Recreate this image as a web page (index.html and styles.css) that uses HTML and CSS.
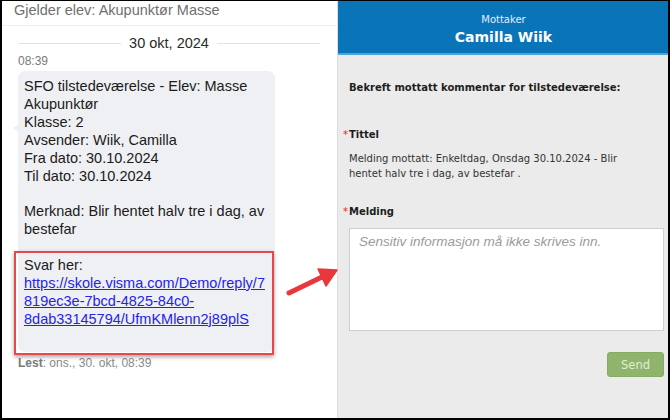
FILE: index.html
```html
<!DOCTYPE html>
<html lang="no">
<head>
<meta charset="utf-8">
<title>Svar</title>
<link rel="stylesheet" href="styles.css">
</head>
<body>
<div class="frame">
  <section class="left">
    <div class="subject">Gjelder elev: Akupunktør Masse</div>
    <div class="date-sep"><span class="rule"></span><span class="date">30 okt, 2024</span><span class="rule"></span></div>
    <div class="time">08:39</div>
    <div class="bubble">
      SFO tilstedeværelse - Elev: Masse Akupunktør<br>
      Klasse: 2<br>
      Avsender: Wiik, Camilla<br>
      Fra dato: 30.10.2024<br>
      Til dato: 30.10.2024<br>
      <br>
      Merknad: Blir hentet halv tre i dag, av bestefar<br>
      <br>
      Svar her:<br>
      <a class="link" href="#">https://skole.visma.com/Demo/reply/7<br>819ec3e-7bcd-4825-84c0-<br>8dab33145794/UfmKMlenn2j89plS</a>
    </div>
    <div class="read"><b>Lest</b>: ons., 30. okt, 08:39</div>
    <div class="highlight"></div>
  </section>
  <section class="right">
    <div class="recipient">
      <div class="r-label">Mottaker</div>
      <div class="r-name">Camilla Wiik</div>
    </div>
    <div class="form">
      <div class="intro">Bekreft mottatt kommentar for tilstedeværelse:</div>
      <div class="label label-title"><span class="req">*</span>Tittel</div>
      <div class="value">Melding mottatt: Enkeltdag, Onsdag 30.10.2024 - Blir hentet halv tre i dag, av bestefar .</div>
      <div class="label label-msg"><span class="req">*</span>Melding</div>
      <textarea class="message" placeholder="Sensitiv informasjon må ikke skrives inn."></textarea>
      <div class="actions"><button class="send" type="button">Send</button></div>
    </div>
  </section>
  <svg class="arrow" width="670" height="420" viewBox="0 0 670 420" aria-hidden="true">
    <line x1="289" y1="293" x2="324" y2="276" stroke="#e8383d" stroke-width="5" stroke-linecap="round"/>
    <polygon points="337,270 318,269 326,286" fill="#e8383d" stroke="#e8383d" stroke-width="1.5" stroke-linejoin="round"/>
  </svg>
</div>
</body>
</html>
```

FILE: styles.css
```css
html, body {
  margin: 0;
  padding: 0;
  background: #000;
}

.frame {
  position: relative;
  width: 670px;
  height: 420px;
  box-sizing: border-box;
  border-style: solid;
  border-color: #000;
  border-width: 1px 2px 2px 2px;
  display: grid;
  grid-template-columns: 335px 1fr;
  overflow: hidden;
}

/* ---------- left: message thread ---------- */
.left {
  position: relative;
  background: #fff;
  font-family: "Liberation Sans", Arial, sans-serif;
  font-size: 14.5px;
  color: #1b1b1b;
  display: flex;
  flex-direction: column;
}

.subject {
  height: 24px;
  padding: 0 12px;
  line-height: 18px;
  color: #6f6f6f;
  border-bottom: 1px solid #efefef;
  overflow: hidden;
}

.date-sep {
  margin-top: 8px;
  padding: 0 17px 0 16px;
  display: flex;
  align-items: center;
  gap: 8px;
  line-height: 18px;
  color: #2b2b2b;
}

.rule {
  flex: 1;
  height: 1px;
  background: #e3e3e3;
}

.time {
  margin: 2px 0 3px 16px;
  font-size: 12px;
  line-height: 14px;
  color: #7a7a7a;
}

.bubble {
  position: relative;
  margin-left: 16px;
  width: 257px;
  box-sizing: border-box;
  padding: 7px 3px 23px 6px;
  background: #eff0f3;
  border-radius: 7px;
  line-height: 17.9px;
}

.bubble::before {
  content: "";
  position: absolute;
  left: -5px;
  top: 53px;
  border-style: solid;
  border-width: 4px 6px 5px 0;
  border-color: transparent #eff0f3 transparent transparent;
}

.link {
  color: #2424e8;
  text-decoration: underline;
}

.read {
  margin: 4px 0 0 16px;
  font-size: 12px;
  line-height: 14px;
  color: #8a8a8a;
}

.read b {
  color: #7a7a7a;
}

.highlight {
  position: absolute;
  left: 12px;
  top: 250px;
  width: 260px;
  height: 104px;
  box-sizing: border-box;
  border: 2px solid #e8474c;
  box-shadow: 0 2px 4px rgba(0, 0, 0, 0.35);
}

/* ---------- right: reply form ---------- */
.right {
  background: #ebebeb;
  border-left: 1px solid #dedede;
  font-family: "DejaVu Sans", Verdana, sans-serif;
  font-size: 10px;
  color: #2a2a2a;
  display: flex;
  flex-direction: column;
}

.recipient {
  height: 54px;
  box-sizing: border-box;
  padding-top: 13px;
  background: #0a74b9;
  border-bottom: 2px solid #4ea3da;
  text-align: center;
  color: #fff;
}

.r-label {
  line-height: 12px;
  color: #e3eef8;
}

.r-name {
  margin-top: 3px;
  font-size: 14px;
  line-height: 17px;
  font-weight: bold;
}

.form {
  padding: 27px 5px 0 11px;
  display: flex;
  flex-direction: column;
}

.intro {
  font-weight: bold;
  line-height: 12px;
  color: #1e1e1e;
}

.label {
  margin-left: -6px;
  font-weight: bold;
  line-height: 12px;
  color: #1e1e1e;
}

.label-title {
  margin-top: 35px;
}

.label-msg {
  margin-top: 25px;
}

.req {
  display: inline-block;
  width: 6px;
  color: #d9282f;
  font-weight: normal;
}

.value {
  margin-top: 10px;
  max-width: 300px;
  line-height: 15px;
  color: #333;
}

.message {
  display: block;
  margin-top: 10px;
  width: 315px;
  height: 103px;
  box-sizing: border-box;
  padding: 5px 9px;
  border: 1px solid #cfcfcf;
  border-radius: 0;
  background: #fff;
  font-family: "Liberation Sans", Arial, sans-serif;
  font-size: 13.5px;
  line-height: 16px;
  resize: none;
  outline: none;
}

.message::placeholder {
  color: #9b9b9b;
  font-style: italic;
}

.actions {
  margin-top: 21px;
  width: 315px;
  display: flex;
  justify-content: flex-end;
}

.send {
  width: 57px;
  height: 25px;
  padding: 0;
  border: 1px solid #86ab62;
  border-radius: 3px;
  background: #8eb56b;
  color: #e3eed8;
  font-family: "DejaVu Sans", Verdana, sans-serif;
  font-size: 11.5px;
}

.arrow {
  position: absolute;
  left: -2px;
  top: -1px;
  pointer-events: none;
}
```
